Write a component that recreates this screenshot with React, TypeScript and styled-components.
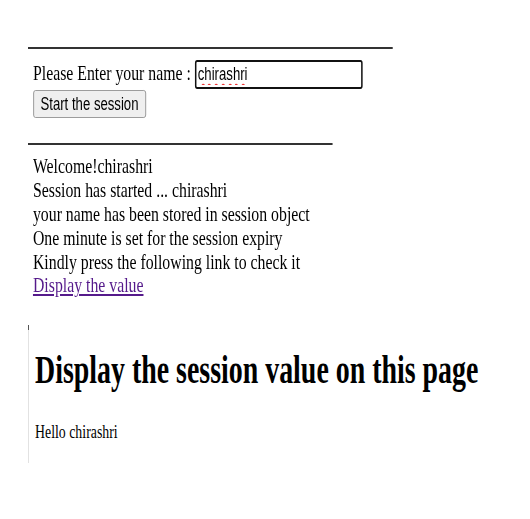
import React from 'react'
import styled, { createGlobalStyle } from 'styled-components'

const GlobalStyle = createGlobalStyle`
    body {
        margin: 0;
        background: #fff;
        color: #000;
        font-family: 'Liberation Serif', 'Times New Roman', serif;
    }
`

const Page = styled.div`
    padding: 47px 0 0 28px;
`

// the screenshot is squeezed sideways, so each part is drawn wide and scaled back
const Squeeze = styled.div<{ $scale: number }>`
    transform: scaleX(${(p) => p.$scale});
    transform-origin: left top;
`

const Rule = styled.hr<{ $width: number; $gap?: number }>`
    width: ${(p) => p.$width}px;
    height: 2px;
    margin: ${(p) => p.$gap ?? 0}px 0 0;
    border: none;
    background: #333;
`

const FormBody = styled.div`
    padding-left: 6.6px;
    font-size: 21px;
`

const NameRow = styled.div`
    display: flex;
    align-items: baseline;
    margin-top: 11px;
    line-height: 24px;
`

const Label = styled.span`
    white-space: pre;
`

const NameInput = styled.input`
    box-sizing: border-box;
    width: 223px;
    height: 29px;
    padding: 1px 2px;
    border: 2px solid #111;
    border-radius: 3px;
    font-family: 'Liberation Sans', Arial, sans-serif;
    font-size: 17.5px;
    color: #000;
    caret-color: #000;
    text-decoration: underline wavy #e33;
    text-decoration-skip-ink: none;
    text-underline-offset: 3px;
    outline: none;
`

const StartButton = styled.button`
    display: block;
    box-sizing: border-box;
    height: 28px;
    margin-top: 1px;
    padding: 0 9px;
    border: 1px solid #8f8f8f;
    border-radius: 3px;
    background: #efefef;
    font-family: 'Liberation Sans', Arial, sans-serif;
    font-size: 17.5px;
    color: #000;
`

const Messages = styled.div`
    margin-top: 10.4px;
    padding-left: 6.6px;
    font-size: 21px;
    line-height: 23.8px;
`

const Line = styled.div``

const ValueLink = styled.a`
    color: #551a8b;
    text-decoration: underline;
`

const ResultPanel = styled.section`
    position: relative;
    margin-top: 27px;
    padding: 22px 0 20px 6px;
    border-left: 1px solid #e2e2e2;

    &::before {
        content: '';
        position: absolute;
        left: -1px;
        top: 0;
        width: 1px;
        height: 5px;
        background: #555;
    }
`

const ResultTitle = styled.h1`
    margin: 0;
    font-size: 39.3px;
    font-weight: bold;
    white-space: nowrap;
`

const ResultText = styled.p`
    margin: 27.5px 0 0;
    font-size: 19.5px;
`

const App = () => {
    const name = 'chirashri'

    return (
        <Page>
            <GlobalStyle />
            <Squeeze $scale={0.752}>
                <Rule $width={485} />
                <FormBody>
                    <NameRow>
                        <Label>Please Enter your name : </Label>
                        <NameInput defaultValue={name} autoFocus spellCheck={false} />
                    </NameRow>
                    <StartButton>Start the session</StartButton>
                </FormBody>
                <Rule $width={405} $gap={25} />
                <Messages>
                    <Line>Welcome!{name}</Line>
                    <Line>Session has started ... {name}</Line>
                    <Line>your name has been stored in session object</Line>
                    <Line>One minute is set for the session expiry</Line>
                    <Line>Kindly press the following link to check it</Line>
                    <ValueLink href={'#'}>Display the value</ValueLink>
                </Messages>
            </Squeeze>
            <ResultPanel>
                <Squeeze $scale={0.71}>
                    <ResultTitle>Display the session value on this page</ResultTitle>
                    <ResultText>Hello {name}</ResultText>
                </Squeeze>
            </ResultPanel>
        </Page>
    )
}

export default App
